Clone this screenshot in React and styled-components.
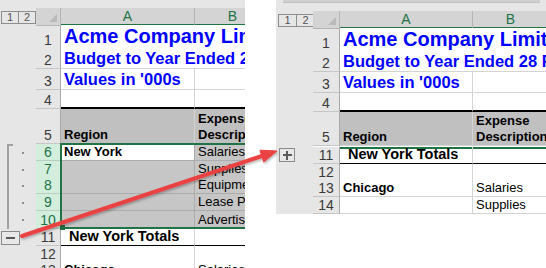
import React from 'react';
import styled, { createGlobalStyle, css } from 'styled-components';

const GlobalStyle = createGlobalStyle`
  html, body { margin: 0; padding: 0; background: #fff; }
  body { font-family: "Liberation Sans", Arial, sans-serif; }
`;

const GREEN = '#217346';
const GRID = '#d4d4d4';
const SEL_GRID = '#acacac';

const textKinds = {
  title: css`font-size: 20px; font-weight: 700; color: #0000ff;`,
  sub: css`font-size: 16.5px; font-weight: 700; color: #0000ff;`,
  bold: css`font-size: 13px; font-weight: 700; color: #000;`,
  plain: css`font-size: 13px; color: #000;`,
  total: css`font-size: 14.5px; font-weight: 700; color: #000;`,
};

const Page = styled.div`
  position: relative;
  width: 546px;
  height: 268px;
  overflow: hidden;
  display: flex;
  align-items: flex-start;
  gap: 31px;
  background: #fff;
`;

const Sheet = styled.div`
  width: ${p => p.$width}px;
  height: ${p => p.$height}px;
  flex-shrink: 0;
  overflow: hidden;
  background: #e6e6e6;
  display: flex;
  flex-direction: column;
`;

const TopStrip = styled.div`
  height: ${p => p.$h}px;
  flex-shrink: 0;
  padding: 0 6px 0 7px;
`;

const FormulaEdge = styled.div`
  height: 2px;
  background: #d0d0d0;
  border-bottom: 1px solid #c2c2c2;
`;

const Row = styled.div`
  display: grid;
  grid-template-columns: ${p => `${p.$cols.gutter}px ${p.$cols.head}px ${p.$cols.a}px ${p.$cols.b}px`};
  height: ${p => p.$h}px;
  flex-shrink: 0;
`;

const Gutter = styled.div`
  position: relative;
  display: flex;
  align-items: center;
  background: #e6e6e6;
  ${p => p.$bracket && css`
    &::before {
      content: '';
      position: absolute;
      left: 7px;
      top: 0;
      bottom: 0;
      width: 2px;
      background: #a2a2a2;
    }
  `}
  ${p => p.$bracket === 'start' && css`
    &::after {
      content: '';
      position: absolute;
      left: 7px;
      top: 0;
      width: 6px;
      height: 2px;
      background: #a2a2a2;
    }
  `}
`;

const Levels = styled.div`
  display: flex;
  margin-left: ${p => p.$left}px;
`;

const LevelBox = styled.div`
  width: ${p => p.$w}px;
  height: 11px;
  border: 1px solid #8d8d8d;
  margin-left: -1px;
  display: flex;
  align-items: center;
  justify-content: center;
  font-size: 11px;
  color: #555;
  line-height: 1;
  &:first-child { margin-left: 0; }
`;

const Dot = styled.span`
  margin-left: 22px;
  width: 2px;
  height: 2px;
  background: #8f8f8f;
`;

const Toggle = styled.div`
  position: relative;
  margin-left: ${p => p.$left}px;
  width: ${p => p.$w}px;
  height: 14px;
  box-sizing: border-box;
  border: 1px solid #8a8a8a;
  background: #e8e8e8;
  display: flex;
  align-items: center;
  justify-content: center;
`;

const Bar = styled.span`
  position: absolute;
  background: #5a5a5a;
  ${p => p.$vertical
    ? css`width: 2px; height: 9px;`
    : css`width: 9px; height: 2px;`}
`;

const Corner = styled.div`
  position: relative;
  background: #d4d4d4;
  border-right: 1px solid #b5b5b5;
  border-bottom: 1px solid #b5b5b5;
  &::after {
    content: '';
    position: absolute;
    right: 3px;
    bottom: 3px;
    border-left: 8px solid transparent;
    border-bottom: 8px solid #b9b9b9;
  }
`;

const ColHead = styled.div`
  background: #d4d4d4;
  border-right: 1px solid #b5b5b5;
  border-bottom: 2px solid ${GREEN};
  color: ${GREEN};
  font-size: 14px;
  display: flex;
  align-items: center;
  justify-content: center;
`;

const RowHead = styled.div`
  box-sizing: border-box;
  background: ${p => (p.$sel ? '#d3eedd' : '#e6e6e6')};
  color: ${p => (p.$sel ? GREEN : '#3a3a3a')};
  border-right: 1px solid #a9a9a9;
  border-bottom: 1px solid ${p => (p.$sel ? '#b9cfc2' : '#c6c6c6')};
  border-top: ${p => p.$top || 'none'};
  font-size: 14px;
  line-height: 16px;
  display: flex;
  align-items: flex-end;
  justify-content: center;
`;

const Cell = styled.div`
  position: relative;
  box-sizing: border-box;
  background: ${p => p.$bg || '#fff'};
  border-right: ${p => (p.$spill ? 'none' : `1px solid ${p.$grid || GRID}`)};
  border-bottom: ${p => p.$bottom || `1px solid ${p.$grid || GRID}`};
  border-top: ${p => (p.$double ? '1px solid #fff' : 'none')};
  box-shadow: ${p => (p.$double ? `inset 0 2px 0 ${GREEN}` : 'none')};
  display: flex;
  align-items: flex-end;
  padding-left: ${p => p.$indent ?? 3}px;
  white-space: ${p => (p.$wrap ? 'normal' : 'nowrap')};
  overflow: ${p => (p.$spill ? 'visible' : 'hidden')};
  z-index: ${p => (p.$spill ? 1 : 'auto')};
  line-height: ${p => (p.$wrap ? '16px' : '1.15')};
  ${p => textKinds[p.$kind || 'plain']}
`;

const SelGroup = styled.div`
  position: relative;
  display: flex;
  flex-direction: column;
  flex-shrink: 0;
`;

const SelFrame = styled.div`
  position: absolute;
  top: -1px;
  bottom: 0;
  left: ${p => p.$left}px;
  right: -10px;
  border: 2px solid ${GREEN};
  pointer-events: none;
  z-index: 2;
  &::after {
    content: '';
    position: absolute;
    left: -2px;
    bottom: -3px;
    width: 5px;
    height: 5px;
    background: ${GREEN};
  }
`;

const Arrow = styled.svg`
  position: absolute;
  left: 0;
  top: 0;
  z-index: 10;
  pointer-events: none;
`;

const LEFT = { gutter: 36, head: 25, a: 134, b: 76 };
const RIGHT = { gutter: 37, head: 27, a: 133, b: 76 };

const topRows = [
  { n: 1, h: 23, a: 'Acme Company Limited', ak: 'title', spill: true },
  { n: 2, h: 21, a: 'Budget to Year Ended 28 February', ak: 'sub', spill: true },
  { n: 3, h: 21, a: "Values in '000s", ak: 'sub' },
  { n: 4, h: 19, line: '2px solid #000' },
];

const header5 = h => ({
  n: 5, h, a: 'Region', b: 'Expense Description', ak: 'bold', bk: 'bold', bg: '#c0c0c0', wrapB: true,
});

const groupRows = [
  { n: 6, h: 17, a: 'New York', ak: 'bold', b: 'Salaries', bracket: 'start' },
  { n: 7, h: 16, b: 'Supplies' },
  { n: 8, h: 17, b: 'Equipment' },
  { n: 9, h: 17, b: 'Lease Payments' },
  { n: 10, h: 18, b: 'Advertising' },
].map((r, i) => ({
  ...r,
  mark: 'dot',
  bracket: r.bracket || 'mid',
  sel: true,
  grid: SEL_GRID,
  bgA: i === 0 ? '#fff' : '#c6c6c6',
  bgB: '#c6c6c6',
}));

function LevelButtons({ left, w }) {
  return (
    <Levels $left={left}>
      <LevelBox $w={w}>1</LevelBox>
      <LevelBox $w={w}>2</LevelBox>
    </Levels>
  );
}

function HeaderRow({ cols, left, w }) {
  return (
    <Row $cols={cols} $h={17}>
      <Gutter>
        <LevelButtons left={left} w={w} />
      </Gutter>
      <Corner />
      <ColHead>A</ColHead>
      <ColHead>B</ColHead>
    </Row>
  );
}

function SheetRow({ cols, row }) {
  return (
    <Row $cols={cols} $h={row.h}>
      <Gutter $bracket={row.bracket}>
        {row.mark === 'dot' && <Dot />}
        {row.mark === 'minus' && (
          <Toggle $left={1} $w={19}>
            <Bar />
          </Toggle>
        )}
        {row.mark === 'plus' && (
          <Toggle $left={3} $w={16}>
            <Bar />
            <Bar $vertical />
          </Toggle>
        )}
      </Gutter>
      <RowHead $sel={row.sel} $top={row.double ? '1px solid #fff' : undefined}>
        {row.n}
      </RowHead>
      <Cell
        $kind={row.ak}
        $spill={row.spill}
        $bg={row.bgA || row.bg}
        $grid={row.grid}
        $bottom={row.line}
        $double={row.double}
        $indent={row.indent}
      >
        {row.a}
      </Cell>
      <Cell
        $kind={row.bk}
        $bg={row.bgB || row.bg}
        $grid={row.grid}
        $bottom={row.line}
        $double={row.double}
        $wrap={row.wrapB}
      >
        {row.b}
      </Cell>
    </Row>
  );
}

function LeftSheet() {
  const rest = [
    { n: 11, h: 17, a: 'New York Totals', ak: 'total', indent: 8, line: '1px solid #000', mark: 'minus' },
    { n: 12, h: 16 },
    { n: 13, h: 17, a: 'Chicago', ak: 'bold', b: 'Salaries' },
  ];
  return (
    <Sheet $width={245} $height={268}>
      <TopStrip $h={8} />
      <HeaderRow cols={LEFT} left={1} w={16} />
      {topRows.map(r => <SheetRow key={r.n} cols={LEFT} row={r} />)}
      <SheetRow cols={LEFT} row={header5(35)} />
      <SelGroup>
        {groupRows.map(r => <SheetRow key={r.n} cols={LEFT} row={r} />)}
        <SelFrame $left={LEFT.gutter + LEFT.head - 1} />
      </SelGroup>
      {rest.map(r => <SheetRow key={r.n} cols={LEFT} row={r} />)}
    </Sheet>
  );
}

function RightSheet() {
  const rest = [
    { n: 11, h: 18, a: 'New York Totals', ak: 'total', indent: 8, line: '1px solid #000', mark: 'plus', double: true },
    { n: 12, h: 16 },
    { n: 13, h: 17, a: 'Chicago', ak: 'bold', b: 'Salaries' },
    { n: 14, h: 17, b: 'Supplies' },
  ];
  return (
    <Sheet $width={270} $height={214}>
      <TopStrip $h={11}>
        <FormulaEdge />
      </TopStrip>
      <HeaderRow cols={RIGHT} left={2} w={17} />
      {topRows.map(r => <SheetRow key={r.n} cols={RIGHT} row={r} />)}
      <SheetRow cols={RIGHT} row={header5(34)} />
      {rest.map(r => <SheetRow key={r.n} cols={RIGHT} row={r} />)}
    </Sheet>
  );
}

function PointerArrow() {
  return (
    <Arrow width="546" height="268" viewBox="0 0 546 268">
      <defs>
        <filter id="shade" x="-10%" y="-10%" width="120%" height="140%">
          <feDropShadow dx="1" dy="1.5" stdDeviation="1.2" floodColor="#000" floodOpacity="0.3" />
        </filter>
      </defs>
      <g filter="url(#shade)" fill="#ea4343" stroke="#ea4343">
        <line x1="22" y1="236" x2="262" y2="156" strokeWidth="4" strokeLinecap="round" />
        <polygon points="277,151 263.7,162 259.9,150.2" strokeWidth="1" strokeLinejoin="round" />
      </g>
    </Arrow>
  );
}

export default function App() {
  return (
    <>
      <GlobalStyle />
      <Page>
        <LeftSheet />
        <RightSheet />
        <PointerArrow />
      </Page>
    </>
  );
}
